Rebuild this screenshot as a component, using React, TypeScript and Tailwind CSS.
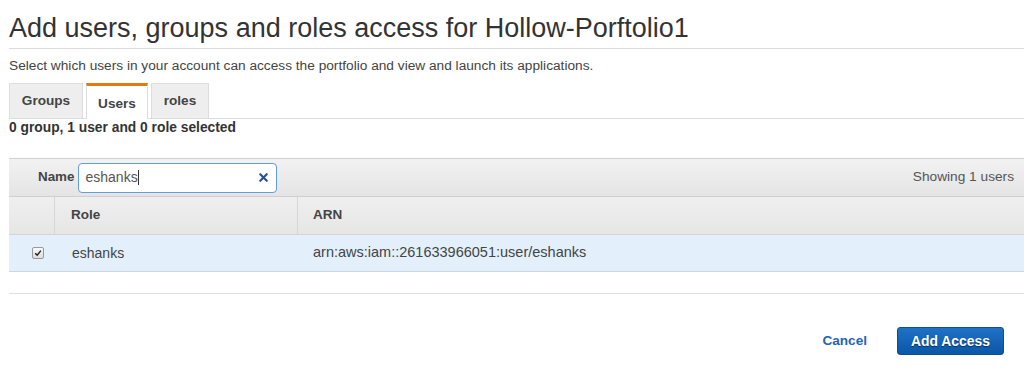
import { X } from "lucide-react";

const tabs = [
  { label: "Groups", w: "w-[74px]", active: false },
  { label: "Users", w: "w-[62px]", active: true },
  { label: "roles", w: "w-[58px]", active: false },
];

export default function App() {
  return (
    <div className="w-[1024px] h-[369px] overflow-hidden bg-white text-[#333] font-['Liberation_Sans',Arial,sans-serif]">
      {/* Header */}
      <div className="pl-[9px]">
        <h1 className="h-[49px] pt-[12px] border-b border-[#dcdcdc] text-[27px] leading-[32px] text-[#333] font-normal">
          Add users, groups and roles access for Hollow-Porftolio1
        </h1>
        <p className="mt-[9px] text-[13.7px] leading-[16px] text-[#444]">
          Select which users in your account can access the portfolio and view and launch its applications.
        </p>

        {/* Tabs */}
        <div className="mt-[9px] flex items-end gap-[3px] border-b border-[#ddd] h-[36px]">
          {tabs.map((t) =>
            t.active ? (
              <div
                key={t.label}
                className={`${t.w} h-[36px] -mb-px bg-white border-x border-[#ddd] border-t-[3px] border-t-[#e47911] flex items-center justify-center pt-[3px] text-[13.6px] font-bold text-[#444]`}
              >
                {t.label}
              </div>
            ) : (
              <div
                key={t.label}
                className={`${t.w} h-[35px] bg-[#eee] border border-b-0 border-[#ddd] flex items-center justify-center text-[13.6px] font-bold text-[#444]`}
              >
                {t.label}
              </div>
            )
          )}
        </div>

        <div className="mt-px text-[13.8px] leading-[16px] font-bold text-[#333]">
          0 group, 1 user and 0 role selected
        </div>

        {/* Table */}
        <div className="mt-[22px]">
          <div className="h-[39px] flex items-center border-t border-b border-[#cfcfcf] bg-gradient-to-b from-[#f2f2f2] to-[#e4e4e4] pr-[10px]">
            <span className="ml-[29px] text-[13.4px] font-bold text-[#444]">Name</span>
            <div className="ml-[4px] w-[199px] h-[30px] flex items-center justify-between rounded-[4px] border border-[#5f9ee0] bg-white pl-[6px] pr-[6px]">
              <span className="text-[14px] text-[#555]">
                eshanks<span className="inline-block w-px h-[15px] bg-[#333] align-middle -mt-[2px]" />
              </span>
              <X className="w-[13px] h-[13px] text-[#2c4f86]" strokeWidth={4} />
            </div>
            <span className="ml-auto text-[13.7px] text-[#555]">Showing 1 users</span>
          </div>

          <div className="h-[38px] flex border-b border-[#d4d4d4] bg-gradient-to-b from-[#efefef] to-[#e6e6e6] text-[13.5px] font-bold text-[#444]">
            <div className="w-[46px] border-r border-[#d6d6d6]" />
            <div className="w-[243px] border-r border-[#d6d6d6] flex items-center pl-[16px]">Role</div>
            <div className="flex-1 flex items-center pl-[15px]">ARN</div>
          </div>

          <div className="h-[37px] flex border-b border-[#c9d6e3] bg-[#e3f0fc] text-[14px] text-[#444]">
            <div className="w-[46px] flex items-center justify-center pl-[12px]">
              <span className="w-[12px] h-[12px] rounded-[2px] border border-[#999] bg-gradient-to-b from-[#fafafa] to-[#ddd] flex items-center justify-center">
                <svg viewBox="0 0 10 10" className="w-[8px] h-[8px]">
                  <path d="M1.5 5.2 L4 7.8 L8.6 2" fill="none" stroke="#222" strokeWidth="1.8" />
                </svg>
              </span>
            </div>
            <div className="w-[243px] flex items-center pl-[17px]">eshanks</div>
            <div className="flex-1 flex items-center pl-[15px] text-[14.5px]">arn:aws:iam::261633966051:user/eshanks</div>
          </div>

          <div className="mt-[21px] border-t border-[#e0e0e0]" />
        </div>
      </div>

      {/* Footer buttons */}
      <div className="mt-[33px] flex items-center justify-end pr-[20px]">
        <button className="text-[13.6px] font-bold text-[#2463b5] mr-[30px]">Cancel</button>
        <button className="w-[107px] h-[28px] rounded-[3px] border border-[#0c4f97] bg-gradient-to-b from-[#1f72c8] to-[#0b56a6] text-[13.9px] font-bold text-white [text-shadow:0_1px_1px_rgba(0,0,0,0.5)]">
          Add Access
        </button>
      </div>
    </div>
  );
}
